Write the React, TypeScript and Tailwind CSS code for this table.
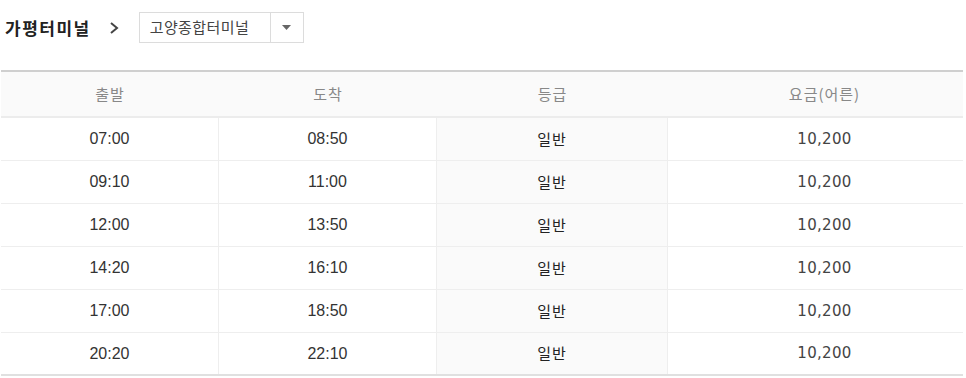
import React from "react";

const rows = [
  ["07:00", "08:50"],
  ["09:10", "11:00"],
  ["12:00", "13:50"],
  ["14:20", "16:10"],
  ["17:00", "18:50"],
  ["20:20", "22:10"],
];

export default function App() {
  return (
    <div
      className="w-[966px] h-[378px] bg-white overflow-hidden text-[#333]"
      style={{ fontFamily: '"Noto Sans CJK KR", "Noto Sans", sans-serif' }}
    >
      <div className="flex items-center h-[55px] pl-[5px]">
        <span className="text-[17px] font-bold text-[#222] tracking-[1.5px]">가평터미널</span>
        <span className="ml-[18px] w-[14px] flex items-center">
          <svg width="10" height="14" viewBox="0 0 10 14">
            <path d="M2 2 L8 7 L2 12" fill="none" stroke="#444" strokeWidth="2" />
          </svg>
        </span>
        <div className="ml-[16px] flex h-[31px] w-[165px] border border-[#dcdcdc] bg-white">
          <div className="flex-1 flex items-center pl-[10px] text-[15px] text-[#444] tracking-[0.4px]">
            고양종합터미널
          </div>
          <div className="w-[33px] border-l border-[#dcdcdc] flex items-center justify-center">
            <svg width="9" height="5" viewBox="0 0 9 5">
              <path d="M0 0 L9 0 L4.5 5 Z" fill="#666" />
            </svg>
          </div>
        </div>
      </div>
      <div className="mt-[15px] ml-[1px] w-[962px] border-t-2 border-[#cfcfcf] border-b-2 border-b-[#e0e0e0]">
        <div className="grid grid-cols-[218px_218px_231px_1fr] h-[46px] bg-[#fafafa] border-b-2 border-[#ececec] text-[15px] tracking-[1px] text-[#888]">
          <div className="flex items-center justify-center">출발</div>
          <div className="flex items-center justify-center">도착</div>
          <div className="flex items-center justify-center">등급</div>
          <div className="flex items-center justify-center pl-[18px]">요금(어른)</div>
        </div>
        {rows.map((r, i) => (
          <div
            key={i}
            className={
              "grid grid-cols-[218px_218px_231px_1fr] " +
              (i < rows.length - 1 ? "h-[43px] border-b border-[#eeeeee]" : "h-[41px]")
            }
          >
            <div className="flex items-center justify-center border-r border-[#eeeeee] text-[16px] text-[#333]" style={{ fontFamily: '"Liberation Sans", Arial, sans-serif' }}>{r[0]}</div>
            <div className="flex items-center justify-center border-r border-[#eeeeee] text-[16px] text-[#333]" style={{ fontFamily: '"Liberation Sans", Arial, sans-serif' }}>{r[1]}</div>
            <div className="flex items-center justify-center border-r border-[#eeeeee] bg-[#fafafa] text-[15px] tracking-[1px] text-[#222]">일반</div>
            <div className="flex items-center justify-center pl-[18px] text-[15px] text-[#444] tracking-[0.3px]" style={{ fontFamily: '"DejaVu Sans", sans-serif' }}>10,200</div>
          </div>
        ))}
      </div>
    </div>
  );
}
